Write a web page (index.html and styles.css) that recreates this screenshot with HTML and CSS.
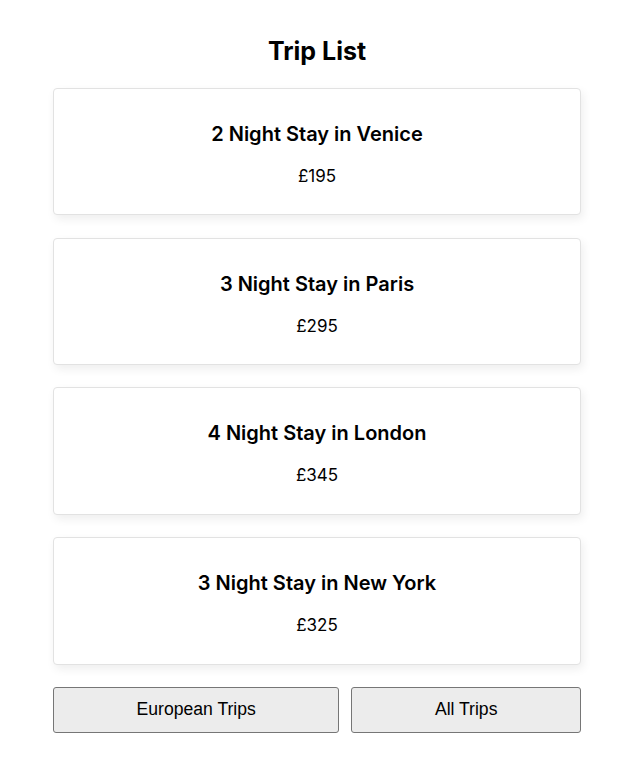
FILE: index.html
```html
<!DOCTYPE html>
<html>
<head>
<meta charset="utf-8">
<link rel="stylesheet" href="styles.css">
</head>
<body>
<main class="app">
  <h1 class="page-title">Trip List</h1>
  <ul class="trip-list">
    <li class="trip-card"><h3 class="trip-name">2 Night Stay in Venice</h3><p class="trip-price">£195</p></li>
    <li class="trip-card"><h3 class="trip-name">3 Night Stay in Paris</h3><p class="trip-price">£295</p></li>
    <li class="trip-card"><h3 class="trip-name">4 Night Stay in London</h3><p class="trip-price">£345</p></li>
    <li class="trip-card"><h3 class="trip-name">3 Night Stay in New York</h3><p class="trip-price">£325</p></li>
  </ul>
  <div class="filters">
    <button class="filter-btn">European Trips</button>
    <button class="filter-btn">All Trips</button>
  </div>
</main>
</body>
</html>
```

FILE: styles.css
```css
html, body {
  margin: 0;
  padding: 0;
  background: #fff;
}
body {
  font-family: Inter, "Noto Sans", sans-serif;
  color: #000;
}
.app {
  width: 528px;
  margin: 0 0 0 53px;
  padding-top: 36px;
}
.page-title {
  margin: 0 0 22px;
  font-size: 25px;
  line-height: 30px;
  font-weight: 700;
  text-align: center;
}
.trip-list {
  list-style: none;
  margin: 0;
  padding: 0;
  display: flex;
  flex-direction: column;
  gap: 22.33px;
}
.trip-card {
  box-sizing: border-box;
  height: 127.4px;
  border: 1px solid #e2e2e2;
  border-radius: 4px;
  padding: 33px 16px 26px;
  text-align: center;
  background: #fff;
  box-shadow: 2px 4px 10px rgba(0, 0, 0, 0.07);
}
.trip-name {
  margin: 0;
  font-size: 20px;
  line-height: 24px;
  font-weight: 600;
}
.trip-price {
  margin: 18px 0 0;
  font-size: 17px;
  line-height: 24px;
}
.filters {
  display: flex;
  gap: 12px;
  margin-top: 22px;
}
.filter-btn {
  flex: 1 1 auto;
  height: 46.5px;
  font-family: "Liberation Sans", Arial, sans-serif;
  font-size: 17.6px;
  color: #000;
  background: #ececec;
  border: 1px solid #767676;
  border-radius: 3px;
  padding: 0 16px;
}
```
